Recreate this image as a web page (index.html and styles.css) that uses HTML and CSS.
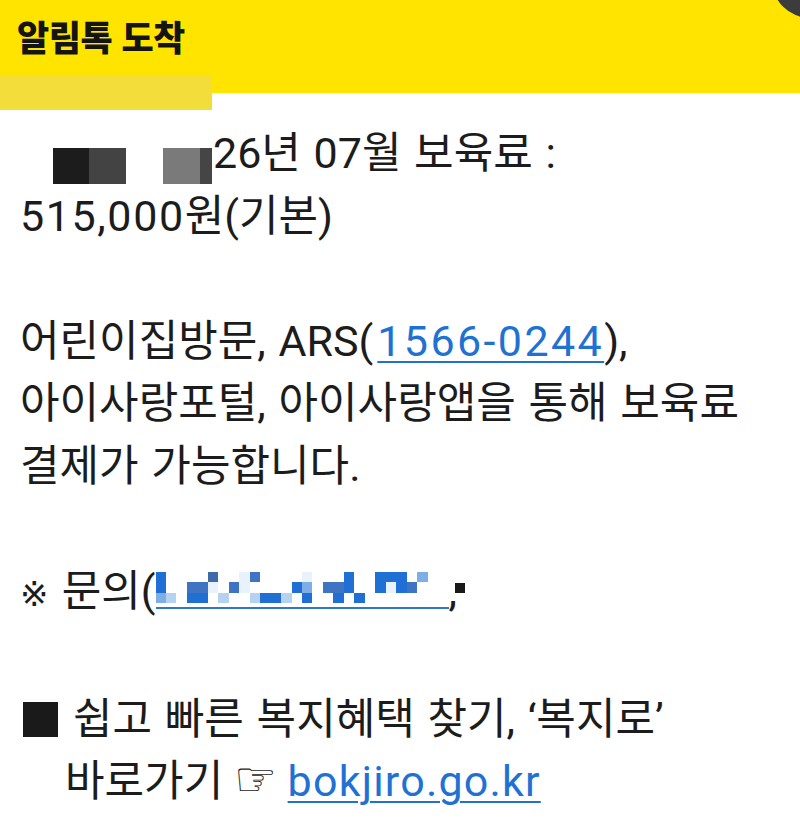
FILE: index.html
```html
<!DOCTYPE html>
<html lang="ko">
<head>
<meta charset="utf-8">
<title>알림톡 도착</title>
<link rel="stylesheet" href="styles.css">
</head>
<body>
<div class="screen">
  <header class="bar">
    <h1 class="title">알림톡 도착</h1>
    <span class="bar-patch"></span>
    <span class="bar-dot"></span>
  </header>
  <main class="msg">
    <p><span class="redact r-a"><i class="k1"></i><i class="k2"></i></span><span class="redact r-b"><i class="k3"></i><i class="k4"></i></span>26년 07월 보육료 :<br><span class="num">515,000</span>원(기본)</p>
    <p>어린이집방문, ARS(<a class="lnk tel">1566-0244</a>),<br>아이사랑포털, 아이사랑앱을 통해 보육료<br>결제가 가능합니다.</p>
    <p><span class="ref">※</span> 문의(<span class="mosaic"><span class="grid"><i class="b"></i><i></i><i></i><i></i><i></i><i class="g"></i><i></i><i></i><i class="w"></i><i class="m"></i><i></i><i></i><i></i><i></i><i class="w"></i><i></i><i></i><i></i><i class="b"></i><i></i><i></i><i class="b"></i><i class="b"></i><i class="b"></i><i></i><i class="l"></i><i></i><i></i><i class="b"></i><i></i><i></i><i class="m"></i><i class="m"></i><i class="w"></i><i></i><i class="m"></i><i class="w"></i><i></i><i></i><i></i><i></i><i class="b"></i><i class="l"></i><i></i><i class="m"></i><i class="m"></i><i class="b"></i><i></i><i></i><i class="b"></i><i class="w"></i><i class="b"></i><i class="m"></i><i></i><i></i><i></i><i class="l"></i><i class="p"></i><i></i><i class="b"></i><i class="b"></i><i></i><i class="p"></i><i></i><i></i><i class="p"></i><i class="b"></i><i class="b"></i><i class="p"></i><i></i><i class="b"></i><i></i><i></i><i class="b"></i><i></i><i class="b"></i><i></i><i></i></span></span><span class="tail">,</span><span class="tail-dot"></span></p>
    <p class="promo"><span class="sq"></span>쉽고 빠른 복지혜택 찾기, ‘복지로’<br><span class="indent">바로가기 <span class="hand">☞</span> <a class="lnk site">bokjiro.go.kr</a></span></p>
  </main>
</div>
</body>
</html>
```
FILE: styles.css
```css
html, body {
  margin: 0;
  padding: 0;
  background: #ffffff;
}
.screen {
  width: 800px;
  height: 832px;
  overflow: hidden;
  position: relative;
  font-family: Roboto, "Noto Sans CJK KR", sans-serif;
  color: #1c1c1c;
}
.bar {
  position: relative;
  height: 93px;
  background: #ffe400;
  display: flex;
  align-items: flex-start;
  padding-left: 17px;
}
.title {
  margin: 0;
  padding-top: 11px;
  font-family: "Noto Sans CJK KR", sans-serif;
  font-size: 35px;
  font-weight: 900;
  line-height: 50px;
  color: #141414;
  letter-spacing: -0.5px;
}
.bar-patch {
  position: absolute;
  left: 0;
  top: 75px;
  width: 212px;
  height: 35px;
  background: #f3dd3a;
}
.bar-dot {
  position: absolute;
  left: 772px;
  top: -58px;
  width: 76px;
  height: 76px;
  border-radius: 50%;
  background: #3c3c3c;
}
.msg {
  padding: 29px 0 0 20px;
  font-size: 43px;
  line-height: 62.5px;
  word-spacing: 2px;
}
.msg p {
  margin: 0 0 62.5px 0;
  white-space: nowrap;
}
.num { letter-spacing: 1.6px; }
.redact {
  display: inline-flex;
  height: 36px;
  vertical-align: top;
  margin-top: 26px;
}
.redact i {
  display: block;
  height: 36px;
}
.r-a { margin-left: 33px; }
.r-b { margin-left: 37px; margin-right: 1px; }
.k1 { width: 36px; background: #1c1c1c; }
.k2 { width: 37px; background: #434343; }
.k3 { width: 37px; background: #7a7a7a; }
.k4 { width: 12px; background: #454545; }
.lnk {
  color: #1f72d2;
  text-decoration: underline;
  text-decoration-thickness: 2px;
  text-underline-offset: 5px;
}
.tel { letter-spacing: 2.4px; margin-left: 4px; }
.site { letter-spacing: 1.2px; }
.ref {
  display: inline-block;
  width: 29px;
  font-family: "DejaVu Sans", sans-serif;
  font-size: 34px;
}
.mosaic {
  display: inline-block;
  width: 293px;
  padding-bottom: 4px;
  border-bottom: 2px solid #2a76d2;
  vertical-align: top;
  margin-top: 12.5px;
}
.grid {
  display: grid;
  grid-template-columns: repeat(28, 1fr);
  grid-auto-rows: 10.4px;
}
.grid i { display: block; background: #ffffff; }
.grid i.b { background: #1f6fd4; }
.grid i.m { background: #3f74c2; }
.grid i.g { background: #3d6aa8; }
.grid i.l { background: #7eaee6; }
.grid i.p { background: #b6d2f1; }
.grid i.w { background: #e9f1fb; }
.tail-dot {
  display: inline-block;
  width: 10px;
  height: 10px;
  background: #1a1a1a;
  vertical-align: top;
  margin-top: 23.5px;
  margin-left: -2px;
}
.sq {
  display: inline-block;
  width: 35px;
  height: 35px;
  background: #1a1a1a;
  margin: 14px 15px 0 3px;
  vertical-align: top;
}
.indent {
  padding-left: 45px;
  word-spacing: 0;
}
.hand {
  font-family: "DejaVu Sans", sans-serif;
  font-size: 48px;
  line-height: 1;
}
```
